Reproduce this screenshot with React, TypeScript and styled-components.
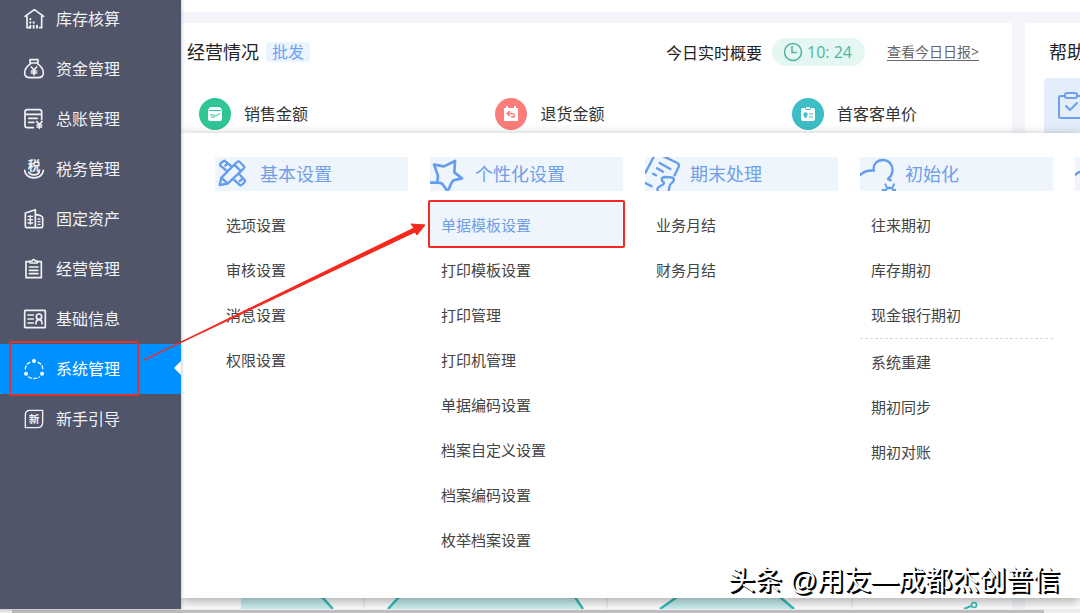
import React from 'react';
import styled, { createGlobalStyle, css } from 'styled-components';

const GlobalStyle = createGlobalStyle`
  *, *::before, *::after { box-sizing: border-box; }
  body {
    margin: 0;
    font-family: "Open Sans", "Noto Sans CJK SC", sans-serif;
    color: #333;
    background: #fff;
  }
  button { font-family: inherit; border: 0; background: none; padding: 0; margin: 0; cursor: pointer; }
  ul { list-style: none; margin: 0; padding: 0; }
  h2, h3 { margin: 0; font-weight: 400; }
  svg { display: block; flex: none; }
`;

const Page = styled.div`
  position: relative;
  display: flex;
  flex-direction: column;
  min-height: 100vh;
  overflow: hidden;
`;

const Shell = styled.div`
  display: flex;
  flex: 1;
`;

const Sidebar = styled.nav`
  position: relative;
  z-index: 2;
  flex: none;
  width: 181px;
  background: #505569;
  box-shadow: 0 0 4px rgba(60, 64, 90, 0.4);

  ul { margin-top: -6px; }
`;

const NavButton = styled.button<{ $active?: boolean }>`
  position: relative;
  display: flex;
  align-items: center;
  gap: 12px;
  width: 100%;
  height: 50px;
  padding-left: 24px;
  font-size: 16px;
  line-height: 24px;
  color: #f1f2f6;
  ${(p) =>
    p.$active &&
    css`
      background: #0090ff;
      color: #fff;
      &::after {
        content: "";
        position: absolute;
        right: 0;
        top: 17px;
        border: 7px solid transparent;
        border-left: 0;
        border-right-color: #fff;
      }
    `}
`;

const NavIcon = styled.svg`
  width: 20px;
  height: 20px;
  fill: none;
  stroke: currentColor;
  stroke-width: 5;
  stroke-linecap: round;
  stroke-linejoin: round;
  overflow: visible;

  text { fill: currentColor; stroke: none; text-anchor: middle; font-weight: 700; }
`;

const Main = styled.main`
  position: relative;
  display: flex;
  flex: 1;
  flex-direction: column;
  min-width: 0;
  overflow: hidden;
  background: #f4f5fb;
`;

const TopStrip = styled.div`
  height: 12px;
  margin-bottom: 11px;
  background: #fff;
`;

const Cards = styled.div`
  display: flex;
  flex: 1;
  gap: 13px;
`;

const OverviewCard = styled.section`
  display: flex;
  flex: 1;
  flex-direction: column;
  min-width: 0;
  padding-top: 15px;
  background: #fff;
`;

const CardHeader = styled.header`
  display: flex;
  align-items: center;
  height: 28px;
  padding: 0 33px 0 6px;
`;

const CardTitle = styled.h2`
  font-size: 18px;
  line-height: 28px;
  color: #222;
  white-space: nowrap;
`;

const Tag = styled.span`
  margin-left: 7px;
  padding: 0 6px;
  font-size: 16px;
  line-height: 20px;
  color: #6fa2f3;
  background: #eaf3fe;
  border-radius: 3px;
`;

const Summary = styled.span`
  margin-left: auto;
  font-size: 16px;
  color: #222;
`;

const TimePill = styled.span`
  display: flex;
  align-items: center;
  gap: 4px;
  width: 93px;
  height: 28px;
  margin: 0 22px 0 10px;
  padding-left: 11px;
  font-size: 16px;
  line-height: 26px;
  color: #4fb39e;
  background: #e4f7f3;
  border-radius: 14px;
`;

const ReportLink = styled.a`
  font-size: 14px;
  line-height: 26px;
  color: #666;
  text-decoration: underline;
  text-underline-offset: 3px;
`;

const Stats = styled.div`
  display: flex;
  justify-content: space-between;
  margin-top: 32px;
  padding: 0 95px 0 18px;
`;

const Stat = styled.div`
  display: flex;
  align-items: center;
  gap: 13px;
  font-size: 16px;
  line-height: 32px;
  color: #333;
`;

const StatBadge = styled.span<{ $color: string }>`
  display: grid;
  place-items: center;
  width: 32px;
  height: 32px;
  border-radius: 50%;
  background: ${(p) => p.$color};
`;

const FlowStrip = styled.svg`
  width: 100%;
  height: 12px;
  margin-top: auto;
`;

const HelpCard = styled.section`
  flex: none;
  width: 55px;
  padding: 15px 0 0 19px;
  overflow: hidden;
  background: #fff;

  h2 { padding-left: 5px; }
`;

const HelpTile = styled.div`
  display: flex;
  width: 180px;
  height: 70px;
  margin-top: 12px;
  padding: 14px;
  background: #e3eefa;
  border-radius: 4px;
`;

const MegaMenu = styled.div`
  position: absolute;
  top: 133px;
  right: 0;
  bottom: 11px;
  left: 0;
  display: grid;
  grid-auto-flow: column;
  grid-auto-columns: 193px;
  gap: 22px;
  align-items: start;
  padding: 24px 0 0 34px;
  overflow: hidden;
  background: #fff;
`;

const MenuShadow = styled.div`
  position: absolute;
  top: 133px;
  right: 0;
  bottom: 11px;
  left: 0;
  box-shadow: 0 3px 11px rgba(0, 0, 0, 0.36);
`;

const GroupTitle = styled.h3`
  display: flex;
  align-items: center;
  gap: 9px;
  height: 34px;
  margin-bottom: 12px;
  font-size: 18px;
  line-height: 32px;
  color: #6f9fe6;
  white-space: nowrap;
  background: #eff5fd;
  overflow: hidden;
`;

const GroupIcon = styled.svg`
  width: 36px;
  height: 34px;
  fill: none;
  stroke: #659cec;
  stroke-width: 7;
  stroke-linecap: round;
  stroke-linejoin: round;
`;

const MenuButton = styled.button<{ $active?: boolean }>`
  display: block;
  width: 100%;
  height: 45px;
  padding-left: 11px;
  font-size: 15px;
  line-height: 45px;
  text-align: left;
  color: ${(p) => (p.$active ? '#6f9fe6' : '#444')};
  background: ${(p) => (p.$active ? '#eff5fd' : 'transparent')};
`;

const Separated = styled.li`
  padding-top: 1px;
  border-top: 1px dashed #d8d8d8;
`;

const BottomBar = styled.footer`
  height: 4px;
  padding: 1px 36px 0 12px;
  background: #ececee;

  &::after { content: ""; display: block; height: 3px; background: #bebebe; }
`;

const Marker = styled.span<{ $x: number; $y: number; $w: number; $h: number; $color: string }>`
  position: absolute;
  z-index: 3;
  left: ${(p) => p.$x}px;
  top: ${(p) => p.$y}px;
  width: ${(p) => p.$w}px;
  height: ${(p) => p.$h}px;
  border: 2px solid ${(p) => p.$color};
  border-radius: 2px;
  pointer-events: none;
`;

const Arrow = styled.svg`
  position: absolute;
  z-index: 3;
  left: 140px;
  top: 220px;
  width: 290px;
  height: 144px;
  pointer-events: none;
`;

const Watermark = styled.div`
  position: absolute;
  z-index: 3;
  right: 20px;
  bottom: 12px;
  font-family: "Liberation Sans", "Noto Sans CJK SC", sans-serif;
  font-size: 27px;
  line-height: 40px;
  color: #fff;
  white-space: nowrap;
  text-shadow: 1px 1px 0 #000, 2px 2px 0 #000;
`;

const icons: Record<string, React.ReactNode> = {
  stock: <><path d="M3 22 31 2 59 22M9 20V56H17M53 20V56H47" /><path d="M19 30v1M19 40v1M29 40v1M19 50v6M29 50v6M39 50v6" strokeWidth="6" /></>,
  fund: <><path d="M18 2H42V12H18ZM20 14C8 22 2 32 2 42C2 52 8 56 18 56H42C52 56 58 52 58 42C58 32 52 22 40 14" /><path d="M22 24 30 33 38 24M30 33V48M22 36H38M22 42H38" /></>,
  ledger: <><path d="M28 56H10Q3 56 3 49V9Q3 2 10 2H46Q53 2 53 9V32M3 16H53M14 28H40M14 40H30" /><path d="M38 38 46 46 54 38M46 46V58M39 48H53M39 54H53" /></>,
  tax: <><text x="30" y="32" fontSize="38">税</text><path d="M2 34C4 64 56 64 58 34M14 40C20 50 40 50 46 40" /></>,
  asset: <><path d="M4 12 34 2V56H8Q4 56 4 52ZM34 16 50 20Q56 22 56 26V52Q56 56 52 56H34" /><path d="M12 22H26M12 32H26M12 42H26M19 20V46M42 30H48M42 38H48M42 46H48" strokeWidth="4" /></>,
  manage: <><path d="M18 8H6V56H52V8H40M18 12V6H24Q29-2 34 6H40V12Z" /><path d="M16 24H42M16 34H42M16 44H42" /></>,
  info: <><rect x="2" y="4" width="62" height="52" rx="2" /><path d="M12 18H28M12 30H28M12 42H28M36 44C36 34 40 32 45 32C50 32 54 34 54 44" /><circle cx="45" cy="23" r="8" /></>,
  system: <><path d="M18 10C8 14 4 22 4 32M42 10C52 14 57 22 56 32M14 54C24 60 36 60 46 54" strokeDasharray="9 7" strokeWidth="4" /><g fill="currentColor" stroke="none"><circle cx="30" cy="6" r="6" /><circle cx="6" cy="44" r="6" /><circle cx="54" cy="44" r="6" /></g></>,
  guide: <><path d="M18 4H56V40Q56 56 40 56H4V18Q4 4 18 4Z" strokeWidth="4" /><text x="30" y="42" fontSize="32">新</text></>,
};

const nav = [
  ['stock', '库存核算'],
  ['fund', '资金管理'],
  ['ledger', '总账管理'],
  ['tax', '税务管理'],
  ['asset', '固定资产'],
  ['manage', '经营管理'],
  ['info', '基础信息'],
  ['system', '系统管理'],
  ['guide', '新手引导'],
];

const cloudPath = (
  <>
    <path d="M-2 56C10 44 24 39 42 41C37 22 52 9 68 9C88 9 100 26 97 44C96 54 92 60 84 66L92 70" />
    <path d="M76 106A13 13 0 0 1 102 106M76 82 81 92M102 82 97 92M81 92H97M68 99H77M101 99H110" strokeWidth="6" />
  </>
);

type Group = { title: string; icon: React.ReactNode; items: string[]; active?: string; breakBefore?: string };

const groups: Group[] = [
  {
    title: '基本设置',
    icon: (
      <>
        <path d="M14 84 19 62 66 15Q70 11 74 15L86 27Q90 31 86 35L38 80ZM58 23 78 43M19 62 38 80" />
        <path d="M36 42 16 26Q14 23 16 20L24 13Q28 10 31 13L48 27M31 26 37 20M74 53 89 69Q91 72 89 75L80 84Q76 86 73 83L56 67M74 72 82 66" />
      </>
    ),
    items: ['选项设置', '审核设置', '消息设置', '权限设置'],
  },
  {
    title: '个性化设置',
    icon: <path strokeWidth="8" d="M-2 77 22 77 24 56 12 23 42 28 75 12 73 46 96 64 70 70C64 76 60 88 57 95Q52 102 47 95L38 82Q34 77 22 77" />,
    items: ['单据模板设置', '打印模板设置', '打印管理', '打印机管理', '单据编码设置', '档案自定义设置', '档案编码设置', '枚举档案设置'],
    active: '单据模板设置',
  },
  {
    title: '期末处理',
    icon: (
      <>
        <path d="M26 0 1 48M56-2 97 18Q104 22 101 29L89 55M44 18 76 36M36 34 54 44M24 50 33 55M-1 77 20 88" />
        <path d="M56 76C46 70 50 60 60 60L80 61C90 64 88 72 80 78C70 84 75 92 70 104M56 76C60 85 46 84 39 92Q35 97 40 106" />
      </>
    ),
    items: ['业务月结', '财务月结'],
  },
  {
    title: '初始化',
    icon: cloudPath,
    items: ['往来期初', '库存期初', '现金银行期初', '系统重建', '期初同步', '期初对账'],
    breakBefore: '系统重建',
  },
  { title: '', icon: cloudPath, items: [] },
];

export default function App() {
  return (
    <Page>
      <GlobalStyle />
      <Shell>
        <Sidebar>
          <ul>
            {nav.map(([id, label]) => (
              <li key={id}>
                <NavButton $active={id === 'system'}>
                  <NavIcon viewBox="0 0 60 60" aria-hidden="true">{icons[id]}</NavIcon>
                  {label}
                </NavButton>
              </li>
            ))}
          </ul>
        </Sidebar>
        <Main>
          <TopStrip />
          <Cards>
            <OverviewCard>
              <CardHeader>
                <CardTitle>经营情况</CardTitle>
                <Tag>批发</Tag>
                <Summary>今日实时概要</Summary>
                <TimePill>
                  <svg width="20" height="20" viewBox="0 0 20 20" fill="none" stroke="currentColor" strokeWidth="1.5" aria-hidden="true">
                    <circle cx="10" cy="10" r="8.5" />
                    <path d="M9 4V10.5H14" />
                  </svg>
                  10: 24
                </TimePill>
                <ReportLink href="#report">查看今日日报&gt;</ReportLink>
              </CardHeader>
              <Stats>
                <Stat>
                  <StatBadge $color="#2fc596">
                    <svg width="16" height="16" viewBox="0 0 16 16" aria-hidden="true">
                      <path d="M3 1H13L15 4V13Q15 15 13 15H3Q1 15 1 13V4Z" fill="#fff" />
                      <path d="M2 4.5H14M3 9H7L9 10 13 7.5M4 11H8" fill="none" stroke="#2fc596" />
                    </svg>
                  </StatBadge>
                  销售金额
                </Stat>
                <Stat>
                  <StatBadge $color="#fa7d7a">
                    <svg width="16" height="16" viewBox="0 0 16 16" aria-hidden="true">
                      <path d="M1 2H3V0H5V2H11V0H13V2H15V15H1Z" fill="#fff" />
                      <path d="M7 5 4 7.5 7 10M4.5 7.5H9Q12 8 11 11H8" fill="none" stroke="#fa7d7a" strokeWidth="1.4" />
                    </svg>
                  </StatBadge>
                  退货金额
                </Stat>
                <Stat>
                  <StatBadge $color="#3dbdc6">
                    <svg width="16" height="16" viewBox="0 0 16 16" aria-hidden="true">
                      <path d="M3 2H5L6 4H10L11 2H13Q15 2 15 4V13Q15 15 13 15H3Q1 15 1 13V4Q1 2 3 2ZM6 1H10V3H6Z" fill="#fff" />
                      <path d="M9 8H13M9 11H13M4 7H7V9.5L5.5 12 4 9.5Z" fill="#3dbdc6" stroke="#3dbdc6" />
                    </svg>
                  </StatBadge>
                  首客客单价
                </Stat>
              </Stats>
              <FlowStrip viewBox="0 0 831 12" preserveAspectRatio="xMinYMax slice" aria-hidden="true">
                <path d="M60 0H141L152 12H60ZM218 0H394L402 12H207ZM496 0H599L613 12H479Z" fill="#c9eff0" />
                <path d="M141 0 152 12M218 0 207 12M394 0 402 12M496 0 479 12M599 0 613 12" fill="none" stroke="#35bdb9" strokeWidth="2.5" />
                <path d="M183 0V12M426 0V12M671 0V12" stroke="#e3e3e6" />
                <path d="M783 12 790 9" stroke="#35bdb9" strokeWidth="2" />
                <circle cx="793" cy="8" r="2.5" fill="none" stroke="#35bdb9" strokeWidth="1.5" />
              </FlowStrip>
            </OverviewCard>
            <HelpCard>
              <CardTitle>帮助</CardTitle>
              <HelpTile>
                <svg width="26" height="28" viewBox="0 0 26 28" fill="none" stroke="#6b9ff0" strokeWidth="2" strokeLinejoin="round" strokeLinecap="round" aria-hidden="true">
                  <path d="M7 4H3Q1 4 1 6V24Q1 26 3 26H23Q25 26 25 24V6Q25 4 23 4H19" />
                  <rect x="7" y="1" width="12" height="5" rx="2" />
                  <path d="M8 14 12 18 19 11" />
                </svg>
              </HelpTile>
            </HelpCard>
          </Cards>
          <MenuShadow />
          <MegaMenu>
            {groups.map((g, i) => (
              <section key={i}>
                <GroupTitle>
                  <GroupIcon viewBox="0 0 108 102" aria-hidden="true">{g.icon}</GroupIcon>
                  {g.title}
                </GroupTitle>
                <ul>
                  {g.items.map((item) => {
                    const Row = item === g.breakBefore ? Separated : 'li';
                    return (
                      <Row key={item}>
                        <MenuButton $active={item === g.active}>{item}</MenuButton>
                      </Row>
                    );
                  })}
                </ul>
              </section>
            ))}
          </MegaMenu>
        </Main>
      </Shell>
      <BottomBar />
      <Marker $x={9} $y={341} $w={130} $h={55} $color="#d93531" />
      <Marker $x={428} $y={200} $w={197} $h={48} $color="#f42a22" />
      <Arrow viewBox="0 0 290 144" aria-hidden="true">
        <path d="M4 140 274 8 271 4 285 5 277 15 275 12 4 140Z" fill="#f5281e" stroke="#f5281e" strokeWidth="1" />
      </Arrow>
      <Watermark>头条 @用友—成都杰创普信</Watermark>
    </Page>
  );
}
